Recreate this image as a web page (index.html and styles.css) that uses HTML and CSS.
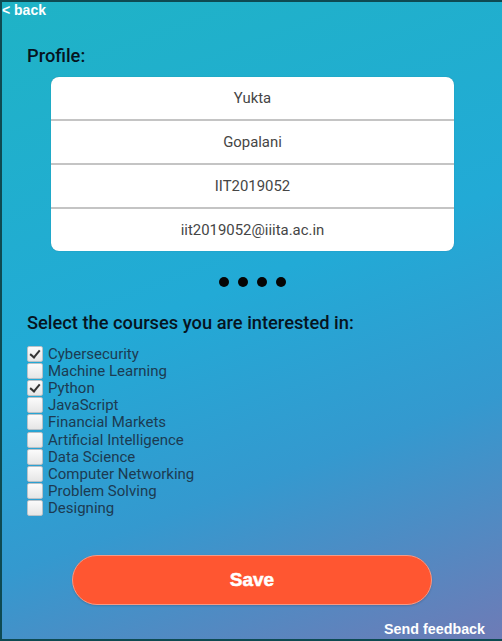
FILE: index.html
```html
<!DOCTYPE html>
<html>
<head>
<meta charset="utf-8">
<link rel="stylesheet" href="styles.css">
</head>
<body>
<div class="page">
  <a class="back">&lt; back</a>
  <h2 class="title">Profile:</h2>
  <div class="card">
    <div class="row">Yukta</div>
    <div class="row">Gopalani</div>
    <div class="row">IIT2019052</div>
    <div class="row">iit2019052@iiita.ac.in</div>
  </div>
  <div class="dots"><span></span><span></span><span></span><span></span></div>
  <h2 class="title sel">Select the courses you are interested in:</h2>
  <div class="courses">
    <label class="course"><input type="checkbox" checked><span>Cybersecurity</span></label>
    <label class="course"><input type="checkbox"><span>Machine Learning</span></label>
    <label class="course"><input type="checkbox" checked><span>Python</span></label>
    <label class="course"><input type="checkbox"><span>JavaScript</span></label>
    <label class="course"><input type="checkbox"><span>Financial Markets</span></label>
    <label class="course"><input type="checkbox"><span>Artificial Intelligence</span></label>
    <label class="course"><input type="checkbox"><span>Data Science</span></label>
    <label class="course"><input type="checkbox"><span>Computer Networking</span></label>
    <label class="course"><input type="checkbox"><span>Problem Solving</span></label>
    <label class="course"><input type="checkbox"><span>Designing</span></label>
  </div>
  <div class="save-wrap"><button class="save">Save</button></div>
  <div class="footer"><a class="feedback">Send feedback</a></div>
</div>
</body>
</html>
```
FILE: styles.css
```css
html, body {
  margin: 0;
  padding: 0;
  height: 100%;
}
body {
  background: #0e4a52;
  overflow: hidden;
}
.page {
  box-sizing: border-box;
  margin: 2px 0 2px 2px;
  height: 637px;
  background: linear-gradient(160deg, #1fb3c6 0%, #22aad6 45%, #3499cf 70%, #6e7bb6 100%);
  font-family: Roboto, "Liberation Sans", sans-serif;
  display: flex;
  flex-direction: column;
  position: relative;
}
.back {
  font-family: "Liberation Sans", Arial, sans-serif;
  font-weight: bold;
  font-size: 14px;
  color: #fff;
  line-height: 16px;
}
.title {
  margin: 27px 0 0 25px;
  font-size: 18.3px;
  font-weight: 500;
  color: #06141f;
  line-height: 22px;
}
.card {
  margin: 10px 0 0 49px;
  width: 403px;
  background: #fff;
  border-radius: 8px;
  overflow: hidden;
  box-shadow: 0 0 1px rgba(0,0,0,0.3);
}
.row {
  height: 42px;
  line-height: 42px;
  text-align: center;
  font-size: 14.9px;
  color: #454545;
  border-bottom: 2px solid #c4c4c4;
}
.row:last-child {
  border-bottom: none;
}
.dots {
  display: flex;
  justify-content: center;
  gap: 9px;
  margin: 26px 0 0 0;
  width: 500px;
}
.dots span {
  width: 10px;
  height: 10px;
  border-radius: 50%;
  background: #050505;
}
.title.sel {
  margin-top: 25px;
}
.courses {
  margin: 11px 0 0 25px;
  display: flex;
  flex-direction: column;
}
.course {
  display: flex;
  align-items: center;
  height: 17.2px;
  font-size: 15px;
  color: #1c3b52;
}
.course input {
  appearance: none;
  -webkit-appearance: none;
  margin: 0 5px 0 0;
  width: 16px;
  height: 16px;
  border: 1px solid #b9c2c8;
  border-radius: 2px;
  background: linear-gradient(#fbfbfb, #e6e6e6);
  box-sizing: border-box;
  position: relative;
}
.course input:checked::after {
  content: "";
  position: absolute;
  left: 4px;
  top: 1px;
  width: 4px;
  height: 8px;
  border: solid #333;
  border-width: 0 2.5px 2.5px 0;
  transform: rotate(40deg);
}
.save-wrap {
  display: flex;
  justify-content: center;
  margin-top: 38px;
  width: 500px;
}
.save {
  width: 360px;
  height: 50px;
  border-radius: 25px;
  background: #ff5631;
  border: 1px solid #f59a86;
  color: #fff;
  font-family: "Liberation Sans", Arial, sans-serif;
  font-weight: 900;
  font-size: 19px;
  -webkit-text-stroke: 0.5px #fff;
  box-shadow: 0 1px 2px rgba(0,0,0,0.15);
}
.footer {
  margin-top: auto;
  display: flex;
  justify-content: flex-end;
  padding: 0 17px 1px 0;
}
.feedback {
  font-family: "Liberation Sans", Arial, sans-serif;
  font-weight: bold;
  font-size: 14.3px;
  color: #fff;
  line-height: 18px;
}
```
